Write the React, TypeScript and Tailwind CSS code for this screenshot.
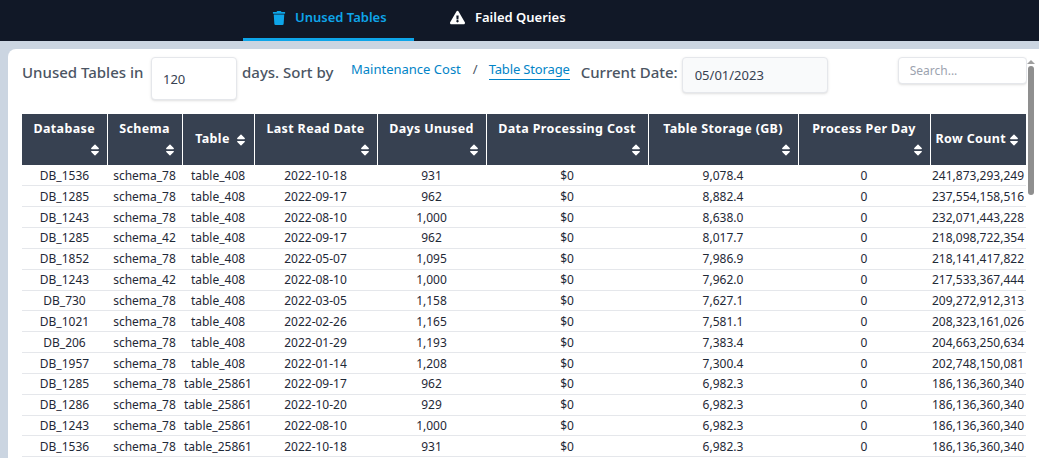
import { FaTrash, FaExclamationTriangle, FaSort } from "react-icons/fa";

type Row = [string, string, string, string, string, string, string];

const COLUMNS = [
  { label: "Database", width: 85, inline: "" },
  { label: "Schema", width: 75, inline: "" },
  { label: "Table", width: 72, inline: "gap-[4px] pl-[7px]" },
  { label: "Last Read Date", width: 123, inline: "" },
  { label: "Days Unused", width: 109, inline: "" },
  { label: "Data Processing Cost", width: 162, inline: "" },
  { label: "Table Storage (GB)", width: 150, inline: "" },
  { label: "Process Per Day", width: 132, inline: "" },
  { label: "Row Count", width: 96, inline: "gap-[1px]" },
];

const ROWS: Row[] = [
  ["DB_1536", "schema_78", "table_408", "2022-10-18", "931", "9,078.4", "241,873,293,249"],
  ["DB_1285", "schema_78", "table_408", "2022-09-17", "962", "8,882.4", "237,554,158,516"],
  ["DB_1243", "schema_78", "table_408", "2022-08-10", "1,000", "8,638.0", "232,071,443,228"],
  ["DB_1285", "schema_42", "table_408", "2022-09-17", "962", "8,017.7", "218,098,722,354"],
  ["DB_1852", "schema_78", "table_408", "2022-05-07", "1,095", "7,986.9", "218,141,417,822"],
  ["DB_1243", "schema_42", "table_408", "2022-08-10", "1,000", "7,962.0", "217,533,367,444"],
  ["DB_730", "schema_78", "table_408", "2022-03-05", "1,158", "7,627.1", "209,272,912,313"],
  ["DB_1021", "schema_78", "table_408", "2022-02-26", "1,165", "7,581.1", "208,323,161,026"],
  ["DB_206", "schema_78", "table_408", "2022-01-29", "1,193", "7,383.4", "204,663,250,634"],
  ["DB_1957", "schema_78", "table_408", "2022-01-14", "1,208", "7,300.4", "202,748,150,081"],
  ["DB_1285", "schema_78", "table_25861", "2022-09-17", "962", "6,982.3", "186,136,360,340"],
  ["DB_1286", "schema_78", "table_25861", "2022-10-20", "929", "6,982.3", "186,136,360,340"],
  ["DB_1243", "schema_78", "table_25861", "2022-08-10", "1,000", "6,982.3", "186,136,360,340"],
  ["DB_1536", "schema_78", "table_25861", "2022-10-18", "931", "6,982.3", "186,136,360,340"],
];

function HeaderCell({ label, inline }: { label: string; inline: string }) {
  if (inline) {
    return (
      <div className={`flex h-full items-center justify-center whitespace-nowrap ${inline}`}>
        <span>{label}</span>
        <FaSort className="shrink-0 text-[14px]" />
      </div>
    );
  }
  return (
    <div className="flex h-full flex-col pt-[7px] pb-[6px]">
      <span className="text-center leading-[16px]">{label}</span>
      <FaSort className="mt-[6px] self-end text-[14px]" />
    </div>
  );
}

export default function App() {
  return (
    <div className="flex h-[458px] w-[1039px] flex-col overflow-hidden bg-[#cbd5e1] font-['Noto_Sans',sans-serif]">
      <nav className="flex h-[41px] shrink-0 bg-[#111827] pl-[243px] text-[13px] font-semibold">
        <a className="flex w-[171px] items-center gap-[9px] border-b-[3px] border-[#0ea5e9] pb-[3px] pl-[29px] text-[#0ea5e9]">
          <FaTrash className="text-[14px]" />
          Unused Tables
        </a>
        <a className="ml-[36px] flex items-center gap-[10px] pb-[6px] text-white">
          <FaExclamationTriangle className="text-[15px]" />
          Failed Queries
        </a>
      </nav>

      <main className="relative mt-[8px] ml-[8px] flex-1 overflow-hidden rounded-tl-[8px] bg-white pl-[14px]">
        <div className="flex h-[65px] items-start pt-[8px] text-[#4b5563]">
          <span className="mt-[4px] w-[121px] text-[15px] font-medium whitespace-nowrap">Unused Tables in</span>
          <input
            readOnly
            value="120"
            className="ml-[8px] h-[43px] w-[86px] rounded border border-[#e5e7eb] bg-white pl-[11px] text-[13px] text-[#374151] shadow-sm"
          />
          <span className="ml-[5px] mt-[4px] w-[94px] text-[15px] font-medium whitespace-nowrap">days. Sort by</span>
          <a className="ml-[15px] mt-[3px] text-[13px] text-[#0284c7]">Maintenance Cost</a>
          <span className="ml-[12px] mt-[3px] text-[13px]">/</span>
          <a className="ml-[11px] mt-[3px] border-b border-[#0284c7] text-[13px] leading-[19px] tracking-[-0.15px] text-[#0284c7]">
            Table Storage
          </a>
          <span className="ml-[11px] mt-[4px] w-[97px] text-[15px] font-medium whitespace-nowrap">Current Date:</span>
          <input
            readOnly
            value="05/01/2023"
            className="ml-[4px] h-[36px] w-[146px] rounded border border-[#e5e7eb] bg-[#f9fafb] pl-[12px] text-[13px] text-[#374151] shadow-sm"
          />
          <input
            readOnly
            placeholder="Search..."
            className="ml-[70px] h-[27px] w-[129px] rounded border border-[#e5e7eb] bg-white pl-[11px] text-[12px] text-[#374151] shadow-sm placeholder:text-[#9ca3af]"
          />
        </div>

        <table className="w-[1004px] table-fixed border-collapse text-[12px] text-[#1f2937]">
          <colgroup>
            {COLUMNS.map((c) => (
              <col key={c.label} style={{ width: c.width }} />
            ))}
          </colgroup>
          <thead>
            <tr className="h-[51px] bg-[#374151] text-[12.5px] font-bold tracking-[0.35px] text-white">
              {COLUMNS.map((c, i) => (
                <th
                  key={c.label}
                  className={`h-[51px] px-[5px] align-top font-bold ${i < COLUMNS.length - 1 ? "border-r border-white" : ""}`}
                >
                  <HeaderCell label={c.label} inline={c.inline} />
                </th>
              ))}
            </tr>
          </thead>
          <tbody>
            {ROWS.map((r, i) => (
              <tr key={i} className="h-[20.85px] border-b border-[#e5e7eb] text-center [&>td]:pt-[1px]">
                <td>{r[0]}</td>
                <td>{r[1]}</td>
                <td className="whitespace-nowrap">{r[2]}</td>
                <td>{r[3]}</td>
                <td>{r[4]}</td>
                <td>$0</td>
                <td>{r[5]}</td>
                <td>0</td>
                <td className="whitespace-nowrap">{r[6]}</td>
              </tr>
            ))}
          </tbody>
        </table>

        {/* scrollbar overlay */}
        <div className="absolute top-[8px] right-0 bottom-0 w-[12px] bg-white pr-[4px]">
          <div className="mx-auto mt-[3px] h-0 w-0 border-x-[4px] border-b-[4px] border-x-transparent border-b-[#9e9e9e]" />
          <div className="mx-auto mt-[2px] h-[129px] w-[6px] rounded-full bg-[#8f8f8f]" />
        </div>
      </main>
    </div>
  );
}
